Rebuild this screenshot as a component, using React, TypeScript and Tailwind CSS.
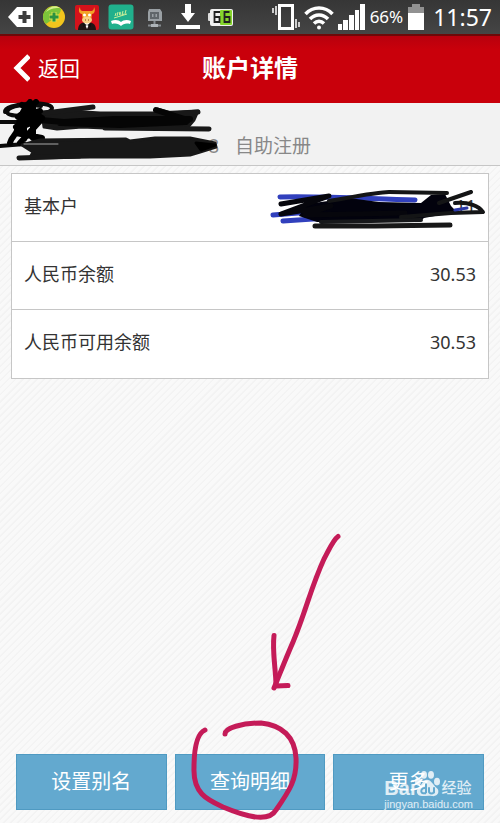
import React from 'react';

interface BalanceRow {
    label: string;
    value: string;
}

const balances: BalanceRow[] = [
    { label: '人民币余额', value: '30.53' },
    { label: '人民币可用余额', value: '30.53' },
];

const StatusBar: React.FC = () => (
    <div className="flex items-center justify-between h-9 px-2 bg-linear-to-b from-[#363636] to-[#454545] border-b-2 border-[#6d0909] text-white">
        <div className="flex items-center gap-2">
            <svg width="26" height="26" viewBox="0 0 26 26">
                <path d="M0 13 9 3h16v20H9z" fill="#fff" />
                <path d="M16.500 7v12M10.500 13h12" stroke="#3d3d3d" strokeWidth="4" />
            </svg>
            <svg width="24" height="26" viewBox="0 0 24 26">
                <circle cx="12" cy="13" r="11" fill="#f2c51d" />
                <path d="M1 12A11 11 0 0 1 19 5C18 12 12 14 4 20A11 11 0 0 1 1 12z" fill="#7cc43a" />
                <path d="M4 8c3-6 10-7 14-4-4 0-9 0-14 4z" fill="#d8f08a" />
                <path d="M12 8v10M7 13h10" stroke="#d5e04a" strokeWidth="5" />
                <path d="M12 8.500v9M7.500 13h9" stroke="#2b9140" strokeWidth="3" />
            </svg>
            <svg width="26" height="26" viewBox="0 0 26 26">
                <rect x="1" y="1" width="24" height="25" rx="2" fill="#d5121b" />
                <path d="M4 26c0-6 4-8 9-8s9 2 9 8z" fill="#201414" />
                <path d="M10 18h6l-3 7z" fill="#fff" />
                <path d="m9 19 4 2 4-2v4l-4-2-4 2z" fill="#111" />
                <path d="M6 3c0 4 2 4 4 4h6c2 0 4 0 4-4 2 4 0 7-2 7l-1 8H9l-1-8C5 10 4 6 6 3z" fill="#f3a127" />
                <ellipse cx="13" cy="16" rx="5" ry="3.500" fill="#f8cf83" />
                <circle cx="10.500" cy="11" r="1.500" fill="#fff" />
                <circle cx="15.500" cy="11" r="1.500" fill="#fff" />
                <path d="M11 16h1m2 0h1" stroke="#8b3d12" />
            </svg>
            <svg width="26" height="26" viewBox="0 0 26 26">
                <rect x="0.500" y="0.500" width="25" height="25" rx="3" fill="#20b08c" />
                <path d="M3 17c4-2 8-1 10 1 2-2 6-3 10-1l-1 3c-4-1-7 0-9 2-2-2-5-3-9-2z" fill="#fff" />
                <path d="m7 12 1-3m1 3 1-4m1 3c2-1 2-3 1-3s-1 3 1 3m2-4-1 4 2-1m2-4-1 4M6 14l13-4" fill="none" stroke="#c9ef9a" />
            </svg>
            <svg width="26" height="26" viewBox="0 0 26 26">
                <path d="M7 5h11l2 3v9H6V8z" fill="#9aa0a4" />
                <path d="M9 9h7v5H9zM12.500 9v5" fill="none" stroke="#60666a" strokeWidth="2" />
                <path d="M12.500 17v4M6 21.500h13" stroke="#858b90" strokeWidth="2" />
                <path d="M9 21.500h7" stroke="#aeb4b8" strokeWidth="3" />
            </svg>
            <svg width="24" height="26" viewBox="0 0 24 26" fill="#fff">
                <path d="M9 0h6v9h4l-7 9-7-9h4zM0 21h24v4H0z" />
            </svg>
            <svg width="26" height="26" viewBox="0 0 26 26">
                <rect x="0" y="9" width="4" height="8" rx="1" fill="#ddd" />
                <rect x="2" y="5" width="23" height="17" rx="2" fill="#f1f1f1" />
                <rect x="12" y="6" width="12" height="15" rx="1" fill="#86d62c" />
                <path d="M12 8H6.500v10h5v-5h-5M21.500 8h-5v10h5v-5h-5" fill="none" stroke="#222" strokeWidth="1.800" />
            </svg>
        </div>
        <div className="flex items-center gap-1">
            <svg width="28" height="28" viewBox="0 0 28 28" fill="none" stroke="#fff">
                <rect x="7.500" y="2.500" width="13" height="23" strokeWidth="3" />
                <path d="M1 5v5M4 3v9M24 16v9M27 19v5" strokeWidth="1.500" />
            </svg>
            <svg width="30" height="28" viewBox="0 0 30 28" fill="none" stroke="#fff" strokeWidth="3.500">
                <path d="M1.500 11c7.500-8 19.500-8 27 0M6 16c5-5.500 13-5.500 18 0M10 20.500c3-3 7-3 10 0" />
                <circle cx="15" cy="24.500" r="2" fill="#fff" stroke="none" />
            </svg>
            <svg width="28" height="28" viewBox="0 0 28 28" fill="#fff">
                <path d="M0 21h4v6H0zM5 17h5v10H5zM11 12h5v15h-5zM17 7h4v20h-4zM22 1h5v26h-5z" />
            </svg>
            <span className="text-[17px] leading-6">66%</span>
            <svg width="18" height="28" viewBox="0 0 18 28">
                <path d="M5 1h8v3h4v7H1V4h4z" fill="#929292" />
                <path d="M1 10h16v17H1z" fill="#fff" />
            </svg>
            <span className="pl-1 text-[23px] leading-6">11:57</span>
        </div>
    </div>
);

const Header: React.FC = () => (
    <header className="grid grid-cols-[1fr_auto_1fr] items-center h-[67px] pb-1 bg-linear-to-b from-[#b8000d] via-[#c9000b] via-20% to-[#c9000b] text-white">
        <button type="button" className="flex items-center gap-2 pl-3 text-[21px] leading-8 justify-self-start">
            <svg width="18" height="28" viewBox="0 0 18 28" fill="none" stroke="#fff" strokeWidth="5">
                <path d="M17 2 5 14l12 12" />
            </svg>
            返回
        </button>
        <h1 className="text-2xl font-bold">账户详情</h1>
    </header>
);

const NameScribble: React.FC = () => (
    <svg className="absolute left-0 -top-1 pointer-events-none" width="222" height="66" viewBox="0 99 222 66" fill="none" stroke="#181818" strokeLinecap="round" strokeLinejoin="round">
        <path d="M42 112 70 111 100 113 156 113 198 111 194 120 188 127 120 127 105 128 82 127 57 129 44 127z" fill="#181818" strokeWidth="3" />
        <path d="M5 112c-1-9 45-12 47-4 1 8-44 11-45 4 2-7 20-8 34-6" stroke="#0a0a0a" strokeWidth="4" />
        <path d="M30 115 93 107M157 110l14 4 27-2M105 128l104 1" strokeWidth="5" />
        <path d="M0 122h25M0 146l25-2" stroke="#0a0a0a" strokeWidth="4" />
        <path d="M40 120l24 2 50-3 76 0M60 123l60 2 66-3M156 110l32 10" stroke="#050505" strokeWidth="6" />
        <path d="M30 102c-6 6-10 15-12 25s-6 8-8 16M36 102l-18 15 22-6-24 16 24-6-20 22M22 105l20 13-25 11 26 13M24 125v14M33 105v33M16 133l26 5" stroke="#000" strokeWidth="6" />
        <path d="M40 140 126 139 130 141 155 138 190 138 215 143 216 147 200 152 190 155 150 157 90 157 30 158 33 152 22 145z" fill="#181818" strokeWidth="3" />
        <path d="M196 143l19 2-14 5z" fill="#000" stroke="#000" strokeWidth="3" />
        <path d="M19 158l60-2" strokeWidth="5" />
        <path d="M24 144h34" stroke="#a7a7a7" strokeWidth="1" />
    </svg>
);

const AccountScribble: React.FC = () => (
    <svg className="absolute right-0 top-4 pointer-events-none" width="220" height="40" viewBox="269 189 220 40" fill="none" strokeLinecap="round" strokeLinejoin="round">
        <path d="M281 196c50-1 90 2 135 3M274 214l50-4M284 220l60-4M300 212l40 5" stroke="#3140bd" strokeWidth="5" />
        <path d="M308 203 350 197 380 201 422 202 432 194 446 193 452 205 458 211 425 217 420 221 318 221 300 215z" fill="#02020d" />
        <path d="M282 203l48-8-48 18 50-8-26 9 100-2" stroke="#06060c" strokeWidth="5" />
        <path d="M330 200c40-7 50-9 60-9l58 1M440 202l32-11" stroke="#141516" strokeWidth="4" />
        <path d="M456 202c14-1 24 3 28 9l-32 1-50 4" stroke="#141516" strokeWidth="4" />
        <path d="M316 225h60l75-1" stroke="#181818" strokeWidth="5" />
        <path d="M322 221l100-2" stroke="#17181a" strokeWidth="4" />
        <path d="M456 209l12-2" stroke="#2c39a8" strokeWidth="3" />
    </svg>
);

const ArrowAndCircle: React.FC = () => (
    <svg className="absolute left-4 -bottom-3 pointer-events-none" width="160" height="292" viewBox="191 530 160 292" fill="none" stroke="#c41b58" strokeWidth="5" strokeLinecap="round" strokeLinejoin="round">
        <path d="M338 536.500C333 540 329 550 324 559C311 587 306 611 293 642C286 658 281 671 274 688" />
        <path d="M274 635.500C272 652 276 670 276 686L288 685.500" />
        <path d="M205 730C196 734 194 753 194 768C193 794 208 800 223 807C242 815 268 824 276 810C290 790 297 779 296 758C295 737 282 725 261 723C242 723 225 728 225 734" />
    </svg>
);

const Watermark: React.FC = () => (
    <div className="absolute left-[51px] top-3 w-max text-white/80 pointer-events-none font-['Liberation_Sans','Noto_Sans_CJK_SC',sans-serif]">
        <div className="flex items-end h-8">
            <span className="text-[20px] leading-5 font-bold">Bai</span>
            <svg width="25" height="29" viewBox="0 0 25 30" preserveAspectRatio="none" fill="currentColor">
                <ellipse cx="3" cy="13" rx="3" ry="4" />
                <ellipse cx="9" cy="6" rx="3" ry="4" />
                <ellipse cx="16" cy="6" rx="3" ry="4" />
                <ellipse cx="22" cy="13" rx="3" ry="4" />
                <path d="M12 11c-4 0-5 5-8 8-4 4-2 9 3 9 3 0 7-1 10 0 6 1 8-5 5-8-4-4-6-9-10-9z" />
                <path d="M11 15v10M11 20c-5-2-6 5-3 5h3M14 19v4c0 3 5 3 5 0v-4 6" fill="none" stroke="#63a9cf" strokeWidth="2" />
            </svg>
            <span className="pl-px text-[15px] leading-5 font-medium">经验</span>
        </div>
        <div className="text-[11px] leading-3">jingyan.baidu.com</div>
    </div>
);

const actionClass = 'w-full h-14 bg-[#63a9cf] border border-[#4f9ac2] text-xl text-white';

export default function App() {
    return (
        <div className="flex flex-col min-h-screen overflow-hidden font-['Noto_Sans','Noto_Sans_CJK_SC',sans-serif] bg-[repeating-linear-gradient(135deg,#f9f9f9_0px,#f9f9f9_3px,#f3f3f3_4px,#f3f3f3_5px)]">
            <StatusBar />
            <Header />

            <section className="relative bg-[#f2f2f2] border-b border-[#c6c6c6] pt-7 pb-1 text-[19px] leading-7 text-[#888]">
                <p className="flex gap-4 pt-px pb-px">
                    <span className="w-[219px] text-right">8</span>
                    <span>自助注册</span>
                </p>
                <NameScribble />
            </section>

            <main className="flex-1 px-[11px] pt-[7px]">
                <dl className="bg-white border border-[#c6c6c6] text-lg text-[#333] divide-y divide-[#c6c6c6]">
                    <div className="relative flex items-center justify-between h-[68px] px-3 pb-1">
                        <dt>基本户</dt>
                        <dd>11</dd>
                        <AccountScribble />
                    </div>
                    {balances.map(row => (
                        <div key={row.label} className="flex items-center justify-between h-[68px] px-3 pb-1">
                            <dt>{row.label}</dt>
                            <dd>{row.value}</dd>
                        </div>
                    ))}
                </dl>
            </main>

            <footer className="grid grid-cols-3 gap-2 px-4 pb-[13px]">
                <button type="button" className={actionClass}>设置别名</button>
                <div className="relative">
                    <button type="button" className={actionClass}>查询明细</button>
                    <ArrowAndCircle />
                </div>
                <div className="relative">
                    <button type="button" className={actionClass}>更多</button>
                    <Watermark />
                </div>
            </footer>
        </div>
    );
}
